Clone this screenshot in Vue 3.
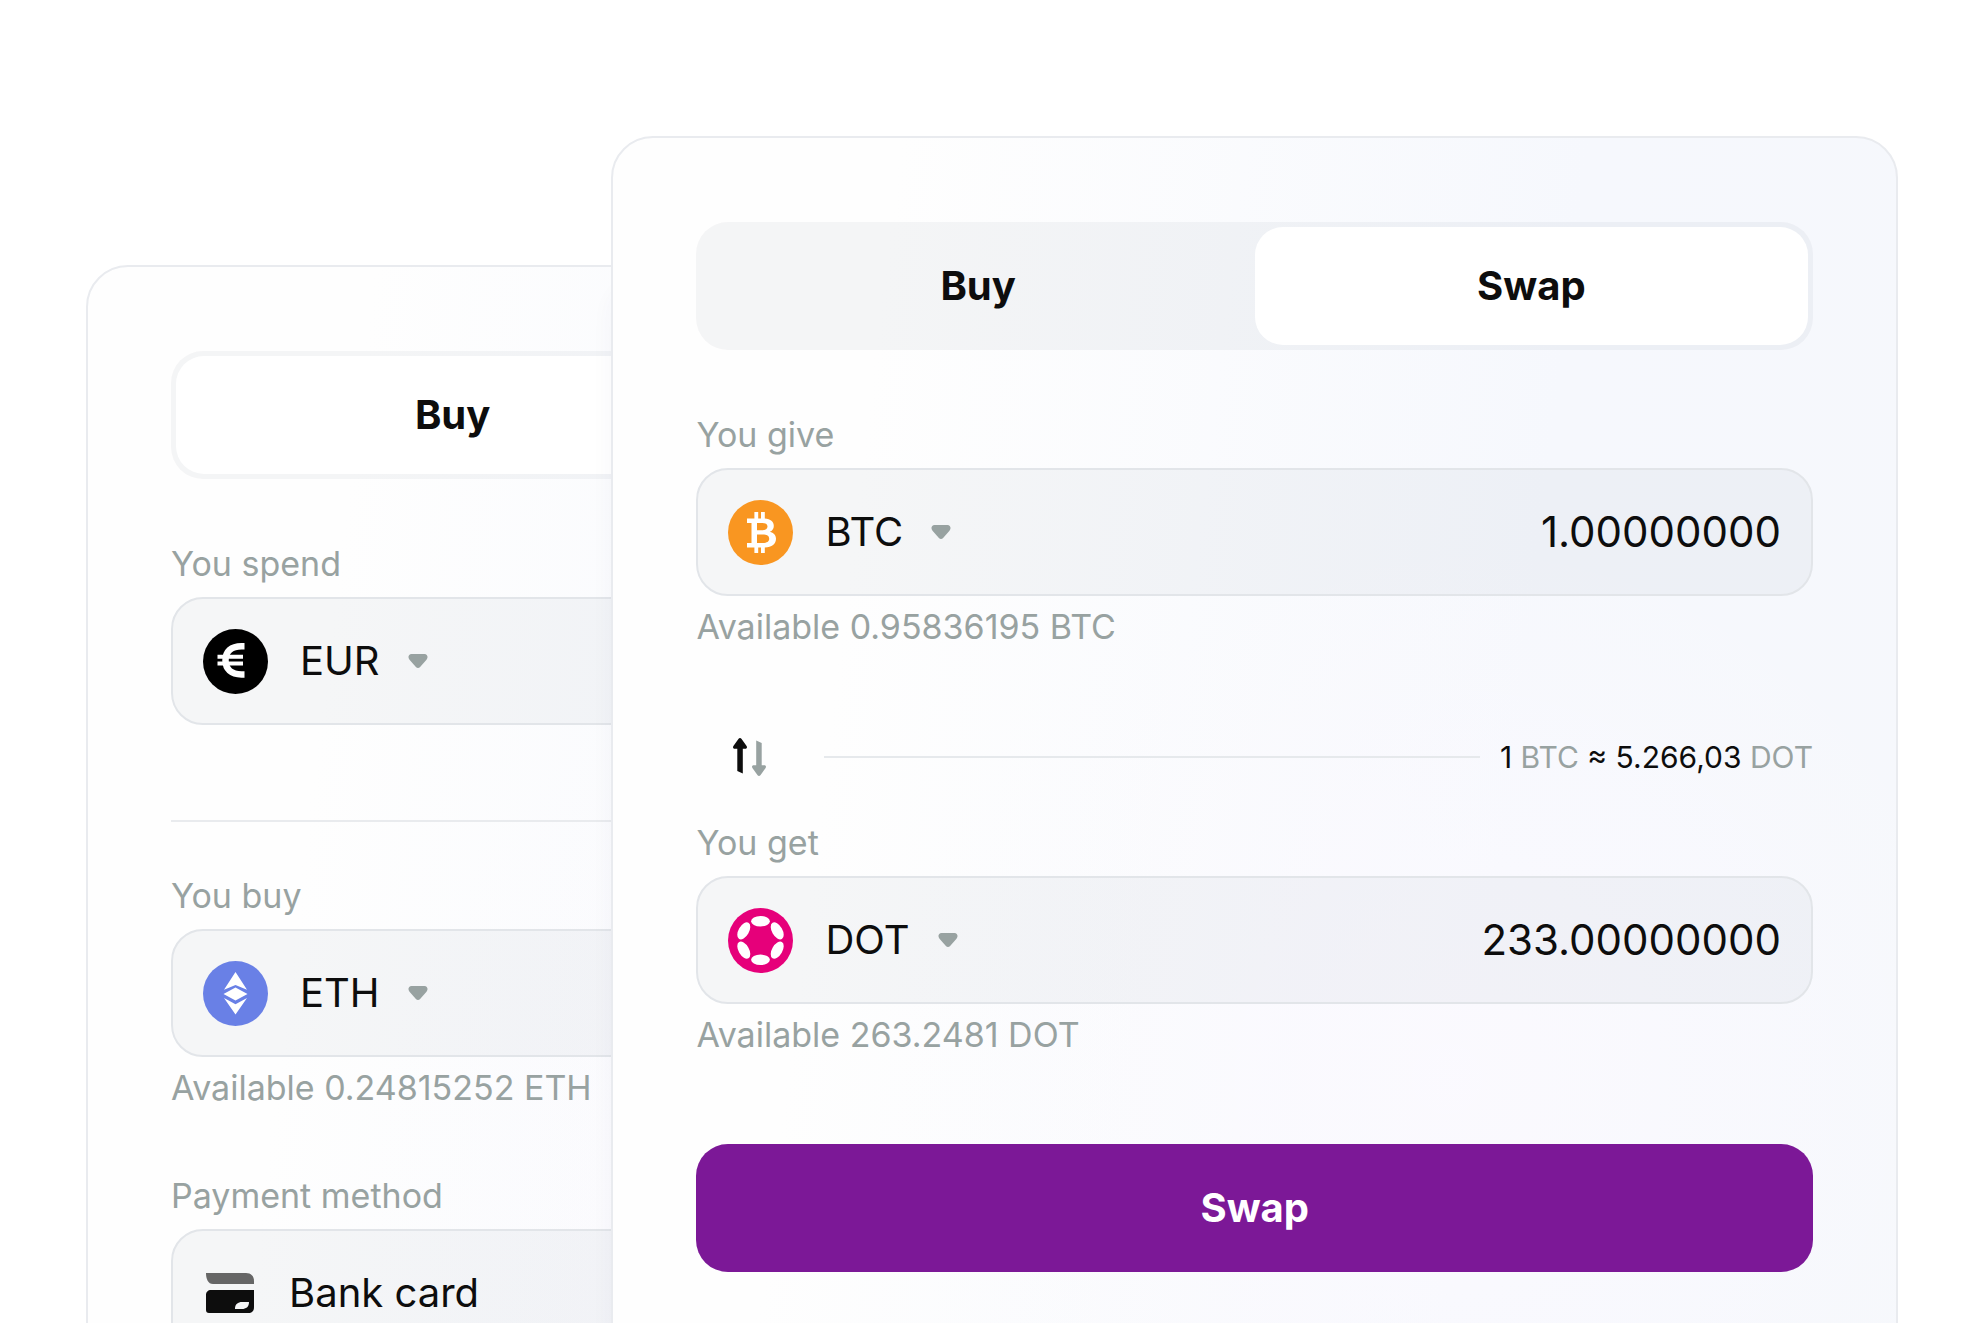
<script setup>
import { ref } from 'vue'

const currencies = ['BTC', 'ETH', 'DOT']

const spend = ref('EUR')
const buy = ref('ETH')
const method = ref('Bank card')

const give = ref({ currency: 'BTC', amount: '1.00000000', available: '0.95836195' })
const get = ref({ currency: 'DOT', amount: '233.00000000', available: '263.2481' })

function flip() {
  const tmp = give.value
  give.value = get.value
  get.value = tmp
}
</script>

<template>
  <main class="stage">
    <svg class="defs" aria-hidden="true">
      <symbol id="coin-BTC" viewBox="0 0 65 65">
        <circle cx="32.5" cy="32.5" r="32.5" fill="#f99621" />
        <path
          fill="#fff"
          fill-rule="evenodd"
          d="M19 18.5h7.4V12h3.8v6.5h2.8V12h3.8v6.6c5.8.5 9 3.1 9 7.3 0 2.8-1.5 4.9-4 5.9 3.9.9 6.2 3.4 6.2 7 0 5.2-4 8.3-11.2 8.7V53H33v-5.5h-2.8V53h-3.8v-5.5H19v-4.6h4.5V23.1H19zM29 23.1v7.2h4.7c3.8 0 5.8-1.2 5.8-3.7 0-2.4-1.9-3.5-5.5-3.5zM29 34.6v8.3h5.9c4.1 0 6.3-1.4 6.3-4.2 0-2.7-2.3-4.1-6.6-4.1z"
        />
      </symbol>
      <symbol id="coin-EUR" viewBox="0 0 65 65">
        <circle cx="32.5" cy="32.5" r="32.5" fill="#000" />
        <g fill="none" stroke="#fff">
          <path stroke-width="6.5" d="M41.5 17.2h-3C28 17.2 22.5 22.5 22.5 31.3S28 45.4 38.5 45.4h3" />
          <path stroke-width="4" d="M14.5 27.8H40M14.5 34.6H40" />
        </g>
      </symbol>
      <symbol id="coin-ETH" viewBox="0 0 65 65">
        <circle cx="32.5" cy="32.5" r="32.5" fill="#6980e6" />
        <path
          fill="#fff"
          d="M32.5 11L44 28.7 32.5 24 21 28.7zM32.5 26.4L44.5 33l-12 6.5-12-6.5zM21 37l11.5 6.2L44 37 32.5 53.5z"
        />
      </symbol>
      <symbol id="coin-DOT" viewBox="0 0 65 65">
        <circle cx="32.5" cy="32.5" r="32.5" fill="#e6007a" />
        <ellipse
          v-for="angle in [0, 60, 120, 180, 240, 300]"
          :key="angle"
          cx="32.5" cy="13.2" rx="9.4" ry="5.2" fill="#fff"
          :transform="`rotate(${angle} 32.5 32.5)`"
        />
      </symbol>
      <symbol id="caret" viewBox="0 0 20 14">
        <path
          fill="#98a2a1"
          d="M3.5 0h13c3 0 4 3.5 2 5.7l-6.400 7.200c-1.200 1.400-3 1.400-4.200 0L1.500 5.700C-.5 3.500.5 0 3.500 0z"
        />
      </symbol>
    </svg>

    <section class="card back">
      <div class="tabs">
        <button type="button" class="tab active">Buy</button>
        <button type="button" class="tab">Swap</button>
      </div>

      <label class="caption" for="spend">You spend</label>
      <div class="field">
        <svg class="coin" aria-hidden="true"><use :href="`#coin-${spend}`" /></svg>
        <select id="spend" v-model="spend">
          <option>EUR</option>
        </select>
        <svg class="caret" aria-hidden="true"><use href="#caret" /></svg>
      </div>

      <hr class="divider" />

      <label class="caption" for="buy">You buy</label>
      <div class="field">
        <svg class="coin" aria-hidden="true"><use :href="`#coin-${buy}`" /></svg>
        <select id="buy" v-model="buy">
          <option v-for="c in currencies" :key="c">{{ c }}</option>
        </select>
        <svg class="caret" aria-hidden="true"><use href="#caret" /></svg>
      </div>
      <p class="available">Available 0.24815252 ETH</p>

      <label class="caption method" for="method">Payment method</label>
      <div class="field">
        <svg class="bank" viewBox="0 0 48 40" aria-hidden="true">
          <path fill="#666" d="M0 0h40c5 0 8 3 8 8v3H7C2 11 0 6 0 0z" />
          <path
            fill="#0d0d0d"
            fill-rule="evenodd"
            d="M5 17h43v17c0 4-2 6-6 6H3c-2 0-3-1-3-3V22c0-3 2-5 5-5zM36 29c-4 0-7 2-7 7h7c4 0 7-2 7-7z"
          />
        </svg>
        <select id="method" v-model="method">
          <option>Bank card</option>
        </select>
      </div>
    </section>

    <section class="card front">
      <div class="tabs">
        <button type="button" class="tab">Buy</button>
        <button type="button" class="tab active">Swap</button>
      </div>

      <label class="caption" for="give">You give</label>
      <div class="field">
        <svg class="coin" aria-hidden="true"><use :href="`#coin-${give.currency}`" /></svg>
        <select id="give" v-model="give.currency">
          <option v-for="c in currencies" :key="c">{{ c }}</option>
        </select>
        <svg class="caret" aria-hidden="true"><use href="#caret" /></svg>
        <input v-model="give.amount" class="amount" type="text" inputmode="decimal" aria-label="Amount you give" />
      </div>
      <p class="available">Available {{ give.available }} {{ give.currency }}</p>

      <div class="rate">
        <button type="button" class="flip" aria-label="Switch currencies" @click="flip">
          <svg viewBox="0 0 33 38" aria-hidden="true">
            <path fill="#0d0d0d" d="M7 0c.6 0 1 .3 1.4.8l5.2 7.2c.9 1.4.2 2.8-1.3 2.8H9.800V35.500L4.300 33V10.800H1.700C.2 10.800-.5 9.400.4 8l5.200-7.200C6 .3 6.400 0 7 0z" />
            <path fill="#98a2a1" d="M26 38c-.6 0-1-.3-1.400-.8L19.400 30c-.9-1.400-.2-2.800 1.300-2.800h2.500V2.500L28.700 5v22.200h2.600c1.500 0 2.200 1.400 1.300 2.800l-5.200 7.200c-.4.500-.8.800-1.400.8z" />
          </svg>
        </button>
        <span class="line"></span>
        <span class="quote">1 <i>BTC</i> ≈ 5.266,03 <i>DOT</i></span>
      </div>

      <label class="caption" for="get">You get</label>
      <div class="field">
        <svg class="coin" aria-hidden="true"><use :href="`#coin-${get.currency}`" /></svg>
        <select id="get" v-model="get.currency">
          <option v-for="c in currencies" :key="c">{{ c }}</option>
        </select>
        <svg class="caret" aria-hidden="true"><use href="#caret" /></svg>
        <input v-model="get.amount" class="amount" type="text" inputmode="decimal" aria-label="Amount you get" />
      </div>
      <p class="available">Available {{ get.available }} {{ get.currency }}</p>

      <button type="button" class="submit">Swap</button>
    </section>
  </main>
</template>

<style>
body { margin: 0; background: #fff }
</style>

<style scoped>
.stage {
  display: grid;
  align-items: start;
  box-sizing: border-box;
  height: 100vh;
  padding: 136px 86px 0;
  overflow: hidden;
  font-family: Inter, 'Liberation Sans', sans-serif;
  color: #0d0d0d;
}
.defs { position: absolute; width: 0; height: 0 }

.card {
  grid-area: 1 / 1;
  display: flex;
  flex-direction: column;
  box-sizing: border-box;
  width: 71%;
  padding: 84px 83px 120px;
  border: 2px solid #e9ebef;
  border-radius: 42px;
  background:
    radial-gradient(circle at 65% 75%, rgba(252, 250, 255, .8), rgba(252, 250, 255, 0) 45%),
    linear-gradient(97deg, #fefefe 20%, #f6f8fd 68%, #f6f8fc);
}
.back { margin-top: 129px }
.front {
  position: relative;
  justify-self: end;
  box-shadow: -8px 140px 16px rgba(30, 40, 80, .02);
}

.tabs {
  display: grid;
  grid-template-columns: 1fr 1fr;
  box-sizing: border-box;
  height: 128px;
  padding: 5px;
  border-radius: 32px;
  background: rgba(10, 25, 50, .04);
}
.tab {
  border: 0;
  border-radius: 28px;
  background: none;
  color: inherit;
  font: 700 40px/48px Inter, 'Liberation Sans', sans-serif;
}
.tab.active { background: #fff }

.caption, .available {
  color: #98a2a1;
  font-size: 34px;
  line-height: 40px;
}
.caption { margin: 65px 0 13px }
.divider + .caption { margin-top: 54px }
.rate + .caption { margin-top: 46px }
.caption.method { margin-top: 68px }
.available { margin: 11px 0 0 }

.field {
  display: flex;
  align-items: center;
  box-sizing: border-box;
  height: 128px;
  padding: 0 30px;
  border: 2px solid #e2e5e9;
  border-radius: 32px;
  background: rgba(10, 25, 70, .036);
}
.coin { flex: none; width: 65px; height: 65px; margin-right: 32px }
.caret { flex: none; width: 20px; height: 14px; margin-left: 28px }
.bank { flex: none; width: 48px; height: 40px; margin: 0 35px 0 3px }

select, .amount {
  padding: 0;
  border: 0;
  background: none;
  color: inherit;
  font: 400 40px/48px Inter, 'Liberation Sans', sans-serif;
}
select { appearance: none; field-sizing: content }
.amount { flex: 1; min-width: 0; font-size: 42px; text-align: right }

.divider {
  width: 100%;
  height: 2px;
  margin: 95px 0 0;
  border: 0;
  background: #e9ebee;
}

.rate { display: flex; align-items: center; height: 40px; margin-top: 90px }
.flip {
  flex: none;
  width: 128px;
  height: 40px;
  padding: 0 0 0 37px;
  border: 0;
  background: none;
}
.flip svg { display: block; width: 33px; height: 38px }
.line { flex: 1; height: 2px; margin-right: 20px; background: #e6e9ec }
.quote { font-size: 30px; line-height: 40px }
.quote i { color: #98a2a1; font-style: normal }

.submit {
  height: 128px;
  margin-top: 89px;
  border: 0;
  border-radius: 32px;
  background: #7c1897;
  color: #fff;
  font: 700 40px/48px Inter, 'Liberation Sans', sans-serif;
}
</style>
